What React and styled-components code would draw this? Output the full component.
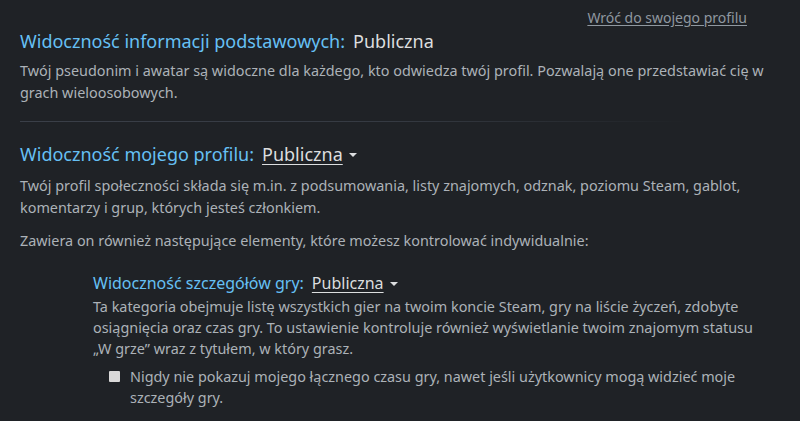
import React from "react";
import styled, { createGlobalStyle } from "styled-components";

const Global = createGlobalStyle`
  html, body { margin: 0; padding: 0; background: #1f2226; }
  body { font-family: "Noto Sans", Arial, sans-serif; }
`;

const Page = styled.div`
  width: 800px;
  height: 421px;
  overflow: hidden;
  box-sizing: border-box;
  padding: 8px 30px 0 20px;
  background: #1f2226;
  color: #acb2b8;
`;

const TopBar = styled.div`
  display: flex;
  justify-content: flex-end;
  height: 20px;
  padding-right: 23px;
`;

const BackLink = styled.a`
  font-size: 14px;
  color: #8f98a0;
  text-decoration: underline;
  text-underline-offset: 2px;
  line-height: 20px;
`;

const Section = styled.section`
  display: flex;
  flex-direction: column;
  padding-left: ${(p) => p.$indent || 0}px;
`;

const Heading = styled.div`
  display: flex;
  align-items: baseline;
  gap: 8px;
  font-size: ${(p) => (p.$small ? 16 : 18)}px;
  line-height: ${(p) => (p.$small ? 24 : 26)}px;
  margin: ${(p) => p.$margin || "0"};
`;

const Label = styled.span`
  color: #66c0f4;
`;

const Value = styled.span`
  color: #dcdedf;
`;

const DropValue = styled.span`
  color: #dcdedf;
  text-decoration: underline;
  text-underline-offset: 3px;
  display: inline-flex;
  align-items: center;
  gap: 6px;
`;

const Caret = styled.span`
  width: 0;
  height: 0;
  border-left: 4px solid transparent;
  border-right: 4px solid transparent;
  border-top: 4px solid #dcdedf;
  align-self: center;
  margin-top: 2px;
`;

const Para = styled.p`
  margin: ${(p) => p.$margin || "0"};
  font-size: 14.4px;
  line-height: ${(p) => p.$lh || 22}px;
  color: #acb2b8;
`;

const Divider = styled.div`
  height: 1px;
  margin: 17px 8px 19px 0;
  background: linear-gradient(to right, #3a3f48 0%, #353a42 50%, rgba(53, 58, 66, 0) 90%);
`;

const CheckRow = styled.label`
  display: flex;
  align-items: flex-start;
  gap: 10px;
  padding-left: 16px;
  margin-top: 7px;
  font-size: 14.4px;
  line-height: 21px;
  color: #acb2b8;
`;

const Box = styled.span`
  flex: none;
  width: 11px;
  height: 11px;
  margin-top: 5px;
  background: #d9d9d9;
  border-radius: 1px;
`;

export default function App() {
  return (
    <Page>
      <Global />
      <TopBar>
        <BackLink href="#">Wróć do swojego profilu</BackLink>
      </TopBar>
      <Section>
        <Heading $margin="0 0 6px">
          <Label>Widoczność informacji podstawowych:</Label>
          <Value>Publiczna</Value>
        </Heading>
        <Para>
          Twój pseudonim i awatar są widoczne dla każdego, kto odwiedza twój profil. Pozwalają one przedstawiać cię w grach wieloosobowych.
        </Para>
      </Section>
      <Divider />
      <Section>
        <Heading $margin="0 0 8px">
          <Label>Widoczność mojego profilu:</Label>
          <DropValue>Publiczna<Caret /></DropValue>
        </Heading>
        <Para>
          Twój profil społeczności składa się m.in. z podsumowania, listy znajomych, odznak, poziomu Steam, gablot, komentarzy i grup, których jesteś członkiem.
        </Para>
        <Para $margin="11px 0 0">
          Zawiera on również następujące elementy, które możesz kontrolować indywidualnie:
        </Para>
      </Section>
      <Section $indent={73}>
        <Heading $small $margin="19px 0 0">
          <Label>Widoczność szczegółów gry:</Label>
          <DropValue>Publiczna<Caret /></DropValue>
        </Heading>
        <Para $lh={21} $margin="1px 0 0">
          Ta kategoria obejmuje listę wszystkich gier na twoim koncie Steam, gry na liście życzeń, zdobyte osiągnięcia oraz czas gry. To ustawienie kontroluje również wyświetlanie twoim znajomym statusu „W grze” wraz z tytułem, w który grasz.
        </Para>
        <CheckRow>
          <Box />
          <span>Nigdy nie pokazuj mojego łącznego czasu gry, nawet jeśli użytkownicy mogą widzieć moje szczegóły gry.</span>
        </CheckRow>
      </Section>
    </Page>
  );
}
